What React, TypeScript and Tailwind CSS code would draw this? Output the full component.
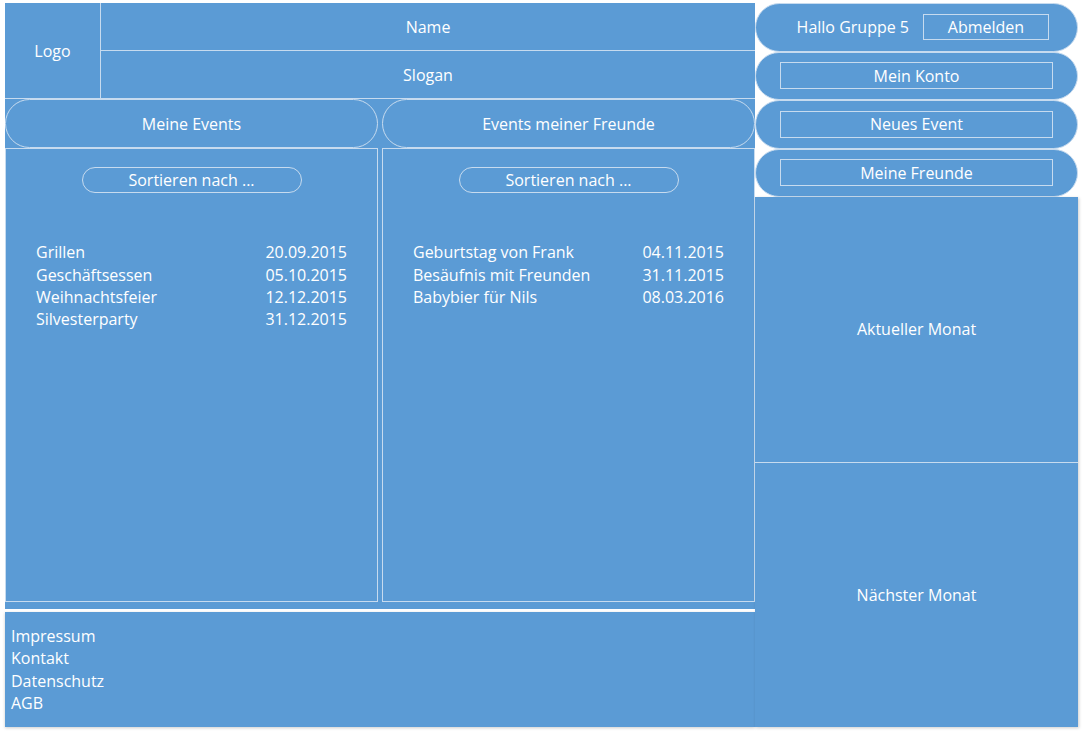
const myEvents = [
  ['Grillen', '20.09.2015'],
  ['Geschäftsessen', '05.10.2015'],
  ['Weihnachtsfeier', '12.12.2015'],
  ['Silvesterparty', '31.12.2015'],
]

const friendEvents = [
  ['Geburtstag von Frank', '04.11.2015'],
  ['Besäufnis mit Freunden', '31.11.2015'],
  ['Babybier für Nils', '08.03.2016'],
]

function EventPanel({ items }: { items: string[][] }) {
  return (
    <div className="flex h-[454px] flex-1 flex-col border border-[#c7dbef]">
      <div className="flex justify-center pt-[18px]">
        <div className="flex h-[26px] w-[220px] items-center justify-center rounded-full border border-[#c7dbef]">
          Sortieren nach ...
        </div>
      </div>
      <div className="mt-[48px] flex flex-col pl-[30px] pr-[30px]">
        {items.map(([name, date]) => (
          <div key={name} className="flex h-[22.4px] items-center justify-between">
            <span>{name}</span>
            <span>{date}</span>
          </div>
        ))}
      </div>
    </div>
  )
}

function SidePill({ children }: { children: React.ReactNode }) {
  return (
    <div className="flex h-[48.5px] items-center rounded-full border border-[#c7dbef] bg-[#5b9bd5]">
      {children}
    </div>
  )
}

export default function App() {
  return (
    <div
      className="flex h-[735px] w-[1084px] bg-white pl-[5px] pt-[3px] text-[16px] text-white"
      style={{ fontFamily: '"Open Sans", "Noto Sans", sans-serif' }}
    >
      {/* main column */}
      <div className="flex w-[750px] flex-col">
        <div className="flex h-[606px] flex-col bg-[#5b9bd5]">
          {/* header */}
          <div className="flex h-[96px] border-b border-[#c7dbef]">
            <div className="flex w-[96px] items-center justify-center border-r border-[#c7dbef]">Logo</div>
            <div className="flex flex-1 flex-col">
              <div className="flex flex-1 items-center justify-center border-b border-[#c7dbef]">Name</div>
              <div className="flex flex-1 items-center justify-center">Slogan</div>
            </div>
          </div>
          {/* tabs */}
          <div className="flex h-[49px] gap-[4px]">
            <div className="flex flex-1 items-center justify-center rounded-full border border-[#c7dbef]">Meine Events</div>
            <div className="flex flex-1 items-center justify-center rounded-full border border-[#c7dbef]">
              Events meiner Freunde
            </div>
          </div>
          {/* panels */}
          <div className="flex gap-[4px]">
            <EventPanel items={myEvents} />
            <EventPanel items={friendEvents} />
          </div>
        </div>
        {/* footer */}
        <div className="mt-[3px] flex h-[115px] flex-col bg-[#5b9bd5] pl-[6px] pt-[13px] shadow-[0_1px_3px_rgba(0,0,0,0.2)]">
          <div className="h-[22.4px] leading-[22.4px]">Impressum</div>
          <div className="h-[22.4px] leading-[22.4px]">Kontakt</div>
          <div className="h-[22.4px] leading-[22.4px]">Datenschutz</div>
          <div className="h-[22.4px] leading-[22.4px]">AGB</div>
        </div>
      </div>

      {/* side column */}
      <div className="flex w-[323px] flex-col">
        <SidePill>
          <div className="flex w-full items-center justify-end pr-[28px]">
            <span className="mr-[14px]">Hallo Gruppe 5</span>
            <div className="flex h-[26px] w-[126px] items-center justify-center border border-[#c7dbef]">Abmelden</div>
          </div>
        </SidePill>
        <SidePill>
          <div className="mx-[24px] flex h-[27px] flex-1 items-center justify-center border border-[#c7dbef]">Mein Konto</div>
        </SidePill>
        <SidePill>
          <div className="mx-[24px] flex h-[27px] flex-1 items-center justify-center border border-[#c7dbef]">Neues Event</div>
        </SidePill>
        <SidePill>
          <div className="mx-[24px] flex h-[27px] flex-1 items-center justify-center border border-[#c7dbef]">Meine Freunde</div>
        </SidePill>
        <div className="flex h-[530px] flex-col bg-[#5b9bd5] shadow-[1px_1px_3px_rgba(0,0,0,0.2)]">
          <div className="flex flex-1 items-center justify-center border-b border-[#c7dbef]">Aktueller Monat</div>
          <div className="flex flex-1 items-center justify-center">Nächster Monat</div>
        </div>
      </div>
    </div>
  )
}
